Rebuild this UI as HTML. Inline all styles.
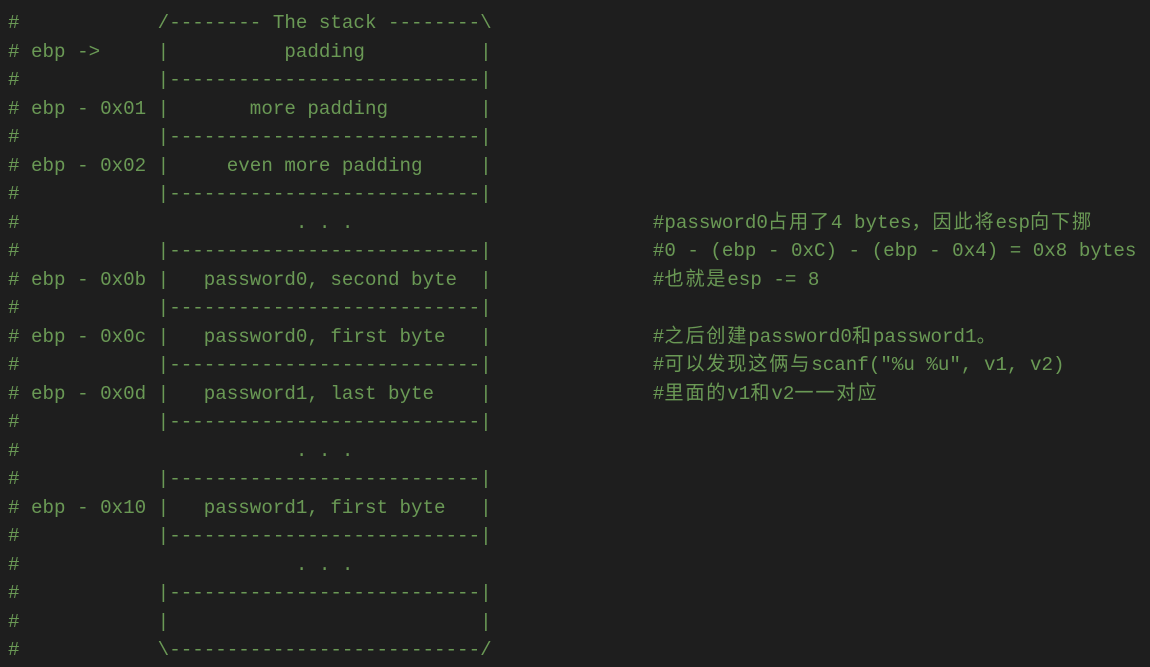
<!DOCTYPE html>
<html><head><meta charset="utf-8"><style>
html,body{margin:0;padding:0;background:#1e1e1e;width:1150px;height:667px;overflow:hidden}
pre{position:absolute;left:8px;top:-19.5px;margin:0;font-family:"Liberation Mono","Noto Sans CJK SC",monospace;font-size:19.2px;line-height:28.5px;color:#6a9955}
.c{letter-spacing:1.8px}
</style></head><body><pre>#
#            /-------- The stack --------\
# ebp ->     |          padding          |
#            |---------------------------|
# ebp - 0x01 |       more padding        |
#            |---------------------------|
# ebp - 0x02 |     even more padding     |
#            |---------------------------|
#                        . . .                          #password0<span class="c">占用了</span>4 bytes<span class="c">，因此将</span>esp<span class="c">向下挪</span>
#            |---------------------------|              #0 - (ebp - 0xC) - (ebp - 0x4) = 0x8 bytes
# ebp - 0x0b |   password0, second byte  |              #<span class="c">也就是</span>esp -= 8
#            |---------------------------|
# ebp - 0x0c |   password0, first byte   |              #<span class="c">之后创建</span>password0<span class="c">和</span>password1<span class="c">。</span>
#            |---------------------------|              #<span class="c">可以发现这俩与</span>scanf("%u %u", v1, v2)
# ebp - 0x0d |   password1, last byte    |              #<span class="c">里面的</span>v1<span class="c">和</span>v2<span class="c">一一对应</span>
#            |---------------------------|
#                        . . .
#            |---------------------------|
# ebp - 0x10 |   password1, first byte   |
#            |---------------------------|
#                        . . .
#            |---------------------------|
#            |                           |
#            \---------------------------/
</pre></body></html>
